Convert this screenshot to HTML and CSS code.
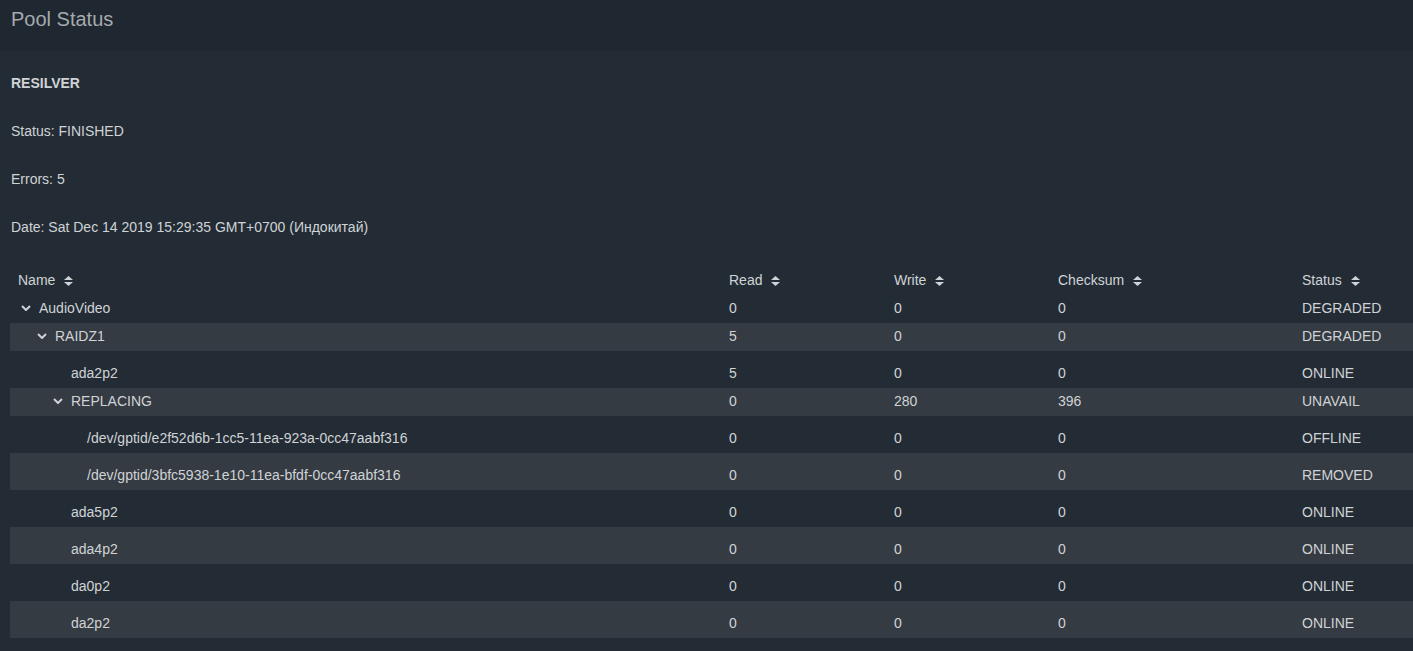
FILE: index.html
```html
<!DOCTYPE html>
<html lang="en">
<head>
    <meta charset="UTF-8">
    <title>Pool Status</title>
    <link rel="stylesheet" href="styles.css">
</head>
<body>

    <div class="page-header">Pool Status</div>

    <div class="content">
        <div class="scan">
            <div class="scan-line scan-title">RESILVER</div>
            <div class="scan-line">Status: FINISHED</div>
            <div class="scan-line">Errors: 5</div>
            <div class="scan-line">Date: Sat Dec 14 2019 15:29:35 GMT+0700 (Индокитай)</div>
        </div>

        <table class="tree-table">
            <colgroup>
                <col class="col-name">
                <col class="col-read">
                <col class="col-write">
                <col class="col-checksum">
                <col>
            </colgroup>
            <thead>
                <tr>
                    <th>Name <svg class="sort" viewBox="0 0 9 10"><path d="M0 4L4.5 0L9 4Z M0 6L4.5 10L9 6Z"/></svg></th>
                    <th>Read <svg class="sort" viewBox="0 0 9 10"><path d="M0 4L4.5 0L9 4Z M0 6L4.5 10L9 6Z"/></svg></th>
                    <th>Write <svg class="sort" viewBox="0 0 9 10"><path d="M0 4L4.5 0L9 4Z M0 6L4.5 10L9 6Z"/></svg></th>
                    <th>Checksum <svg class="sort" viewBox="0 0 9 10"><path d="M0 4L4.5 0L9 4Z M0 6L4.5 10L9 6Z"/></svg></th>
                    <th>Status <svg class="sort" viewBox="0 0 9 10"><path d="M0 4L4.5 0L9 4Z M0 6L4.5 10L9 6Z"/></svg></th>
                </tr>
            </thead>
            <tbody>
                <tr class="node">
                    <td><span class="toggler"><svg viewBox="0 0 10 6"><path d="M1 1L5 5L9 1"/></svg></span>AudioVideo</td>
                    <td>0</td><td>0</td><td>0</td><td>DEGRADED</td>
                </tr>
                <tr class="node odd">
                    <td class="lvl-1"><span class="toggler"><svg viewBox="0 0 10 6"><path d="M1 1L5 5L9 1"/></svg></span>RAIDZ1</td>
                    <td>5</td><td>0</td><td>0</td><td>DEGRADED</td>
                </tr>
                <tr class="leaf">
                    <td class="lvl-2"><span class="toggler"></span>ada2p2</td>
                    <td>5</td><td>0</td><td>0</td><td>ONLINE</td>
                </tr>
                <tr class="node odd">
                    <td class="lvl-2"><span class="toggler"><svg viewBox="0 0 10 6"><path d="M1 1L5 5L9 1"/></svg></span>REPLACING</td>
                    <td>0</td><td>280</td><td>396</td><td>UNAVAIL</td>
                </tr>
                <tr class="leaf">
                    <td class="lvl-3"><span class="toggler"></span>/dev/gptid/e2f52d6b-1cc5-11ea-923a-0cc47aabf316</td>
                    <td>0</td><td>0</td><td>0</td><td>OFFLINE</td>
                </tr>
                <tr class="leaf odd">
                    <td class="lvl-3"><span class="toggler"></span>/dev/gptid/3bfc5938-1e10-11ea-bfdf-0cc47aabf316</td>
                    <td>0</td><td>0</td><td>0</td><td>REMOVED</td>
                </tr>
                <tr class="leaf">
                    <td class="lvl-2"><span class="toggler"></span>ada5p2</td>
                    <td>0</td><td>0</td><td>0</td><td>ONLINE</td>
                </tr>
                <tr class="leaf odd">
                    <td class="lvl-2"><span class="toggler"></span>ada4p2</td>
                    <td>0</td><td>0</td><td>0</td><td>ONLINE</td>
                </tr>
                <tr class="leaf">
                    <td class="lvl-2"><span class="toggler"></span>da0p2</td>
                    <td>0</td><td>0</td><td>0</td><td>ONLINE</td>
                </tr>
                <tr class="leaf odd">
                    <td class="lvl-2"><span class="toggler"></span>da2p2</td>
                    <td>0</td><td>0</td><td>0</td><td>ONLINE</td>
                </tr>
            </tbody>
        </table>
    </div>

</body>
</html>
```

FILE: styles.css
```css
body {
    font-family: "Liberation Sans", Arial, sans-serif;
    font-size: 14px;
    background: #232c35;
    color: #d0d3d6;
    margin: 0;
    overflow: hidden;
}
.page-header {
    height: 51px;
    line-height: 38px;
    padding: 0 11px;
    font-size: 20px;
    color: #a6aaae;
    background: #1f2730;
}
.content {
    padding: 8px 0 0 10px;
}
.scan {
    padding-left: 1px;
    margin-bottom: 15px;
}
.scan-line {
    height: 48px;
    line-height: 48px;
}
.scan-title {
    font-weight: bold;
}
.tree-table {
    width: 100%;
    border-collapse: collapse;
    table-layout: fixed;
}
.col-name {
    width: 711px;
}
.col-read {
    width: 165px;
}
.col-write {
    width: 164px;
}
.col-checksum {
    width: 244px;
}
.tree-table th {
    font-weight: normal;
    text-align: left;
    line-height: 16px;
    padding: 6px 8px 7px;
    white-space: nowrap;
}
.tree-table td {
    line-height: 16px;
    padding: 5px 8px 7px;
    white-space: nowrap;
}
.tree-table .leaf td {
    padding: 14px 8px 7px;
}
.tree-table tr.odd {
    background: #353b42;
}
.sort {
    width: 9px;
    height: 10px;
    margin-left: 5px;
    vertical-align: -1px;
    fill: #d0d3d6;
}
.toggler {
    display: inline-block;
    width: 16px;
    height: 16px;
    margin-right: 5px;
    vertical-align: top;
    text-align: center;
}
.toggler svg {
    width: 10px;
    height: 6px;
    margin-top: 5px;
    fill: none;
    stroke: #d0d3d6;
    stroke-width: 2;
    vertical-align: top;
}
.tree-table td.lvl-1 {
    padding-left: 24px;
}
.tree-table td.lvl-2 {
    padding-left: 40px;
}
.tree-table td.lvl-3 {
    padding-left: 56px;
}
```
